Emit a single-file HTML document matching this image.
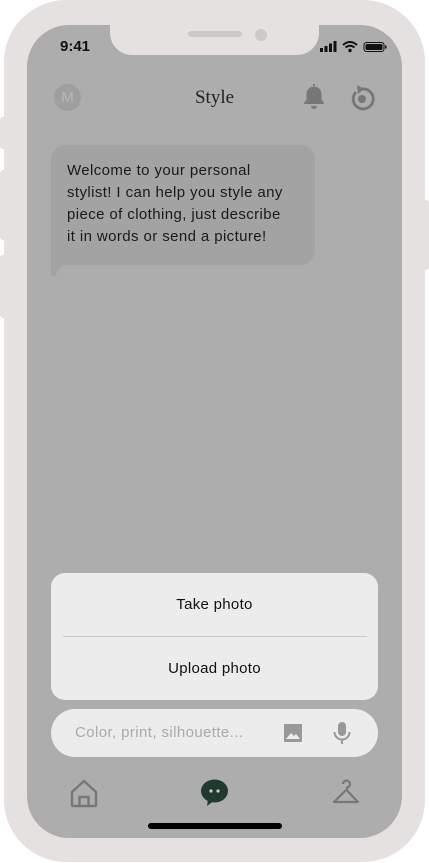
<!DOCTYPE html>
<html><head><style>
*{margin:0;padding:0;box-sizing:border-box}
body{width:429px;height:863px;background:#fff;position:relative;overflow:hidden;font-family:"Liberation Sans",sans-serif}
.phone{position:absolute;left:4px;top:0;width:421px;height:862px;background:#e4e1e0;border-radius:62px}
.btn{position:absolute;background:#e4e1e0;border-radius:3px}
.screen{position:absolute;left:27px;top:25px;width:375px;height:813px;background:#adadad;border-radius:42px;overflow:hidden}
.notch{position:absolute;left:110px;top:0;width:209px;height:55px;background:#e4e1e0;border-radius:0 0 22px 22px}
.abs{position:absolute}
</style></head><body>
<div class="btn" style="left:0;top:117px;width:8px;height:32px"></div>
<div class="btn" style="left:0;top:170px;width:8px;height:70px"></div>
<div class="btn" style="left:0;top:255px;width:8px;height:63px"></div>
<div class="btn" style="left:421px;top:200px;width:8px;height:70px"></div>
<div class="phone"></div>
<div class="screen"></div>
<div class="notch"></div>
<div class="abs" style="left:188px;top:31px;width:54px;height:6px;border-radius:3px;background:#ccc9c8"></div>
<div class="abs" style="left:255px;top:29px;width:12px;height:12px;border-radius:50%;background:#ccc9c8"></div>
<div class="abs" style="left:60px;top:38px;font-size:15px;font-weight:bold;color:#111">9:41</div>
<svg class="abs" style="left:320px;top:41px" width="68" height="12">
<rect x="0" y="7" width="3" height="4" fill="#111"/><rect x="4.5" y="5" width="3" height="6" fill="#111"/><rect x="9" y="2.5" width="3" height="8.5" fill="#111"/><rect x="13.5" y="0" width="3" height="11" fill="#111"/>
<path d="M23 4 Q30 -2 37 4" stroke="#111" stroke-width="2" fill="none"/><path d="M25.5 6.5 Q30 3 34.5 6.5" stroke="#111" stroke-width="2" fill="none"/><circle cx="30" cy="9.5" r="1.7" fill="#111"/>
<rect x="44" y="1.5" width="20" height="9" rx="2.5" fill="none" stroke="#111" stroke-width="1"/><rect x="45.5" y="3" width="17" height="6" rx="1.5" fill="#111"/><rect x="65" y="4.5" width="1.5" height="3" fill="#111"/>
</svg>
<div class="abs" style="left:54px;top:84px;width:27px;height:27px;border-radius:50%;background:#9f9f9f;color:#b8b8b8;font-size:15px;text-align:center;line-height:27px">M</div>
<div class="abs" style="left:0;width:429px;top:87px;text-align:center;font-family:'Liberation Serif',serif;font-size:19px;color:#222">Style</div>
<svg class="abs" style="left:300px;top:82px" width="28" height="30"><path d="M14 2 v2 M5 21 h18 l-2.5-3 v-6 a6.5 6.5 0 0 0 -13 0 v6 z" fill="#777" stroke="#777" stroke-width="2" stroke-linejoin="round"/><path d="M11 24 a3 3 0 0 0 6 0z" fill="#777"/></svg>
<svg class="abs" style="left:347px;top:84px" width="30" height="30"><path d="M9 8 A10 10 0 1 0 15 5" fill="none" stroke="#777" stroke-width="2.8"/><path d="M10 1 L17 5 L11 10 z" fill="#777"/><circle cx="15" cy="15" r="4" fill="#777"/></svg>
<div class="abs" style="left:51px;top:145px;width:264px;height:120px;background:#a3a3a3;border-radius:14px 14px 14px 0"></div>
<div class="abs" style="left:51px;top:258px;width:14px;height:18px;background:#a3a3a3"></div>
<div class="abs" style="left:56px;top:265px;width:30px;height:14px;background:#adadad;border-radius:12px 0 0 0"></div>
<div class="abs" style="left:67px;top:160px;white-space:nowrap;font-size:15px;letter-spacing:0.4px;line-height:22px;color:#1a1a1a">Welcome to your personal<br>stylist! I can help you style any<br>piece of clothing, just describe<br>it in words or send a picture!</div>
<div class="abs" style="left:51px;top:573px;width:327px;height:127px;background:#ececec;border-radius:14px"></div>
<div class="abs" style="left:63px;top:636px;width:304px;height:1px;background:#c8c8c8"></div>
<div class="abs" style="left:51px;top:596px;width:327px;text-align:center;font-size:15px;letter-spacing:0.3px;color:#111">Take photo</div>
<div class="abs" style="left:51px;top:660px;width:327px;text-align:center;font-size:15px;letter-spacing:0.3px;color:#111">Upload photo</div>
<div class="abs" style="left:51px;top:709px;width:327px;height:48px;background:#ececec;border-radius:24px"></div>
<div class="abs" style="left:75px;top:724px;font-size:15px;letter-spacing:0.4px;color:#aaa">Color, print, silhouette...</div>
<svg class="abs" style="left:283px;top:723px" width="20" height="20"><rect x="1" y="1" width="18" height="18" fill="#999"/><path d="M3 16 L8 10 L11 13 L13 11 L17 16 z" fill="#eee"/></svg>
<svg class="abs" style="left:332px;top:721px" width="20" height="24"><rect x="6" y="1" width="8" height="14" rx="4" fill="#999"/><path d="M2.5 11 a7.5 7.5 0 0 0 15 0" fill="none" stroke="#999" stroke-width="2"/><rect x="9" y="18" width="2" height="5" fill="#999"/></svg>
<svg class="abs" style="left:70px;top:779px" width="28" height="29"><path d="M2 13 L14 2 L26 13 V26 a1 1 0 0 1 -1 1 H3 a1 1 0 0 1 -1 -1 z" fill="none" stroke="#777" stroke-width="2.4" stroke-linejoin="round"/><path d="M9.5 27 V18 h9 v9" fill="none" stroke="#777" stroke-width="2.4"/></svg>
<svg class="abs" style="left:200px;top:778px" width="30" height="30"><ellipse cx="14.5" cy="13" rx="13.5" ry="11.5" fill="#1f3a2f"/><path d="M8 21 L7 28 L15 22 z" fill="#1f3a2f"/><circle cx="11" cy="13" r="1.6" fill="#ccc"/><circle cx="18" cy="13" r="1.6" fill="#ccc"/></svg>
<svg class="abs" style="left:331px;top:778px" width="30" height="28"><path d="M12 6 a3.5 3.5 0 1 1 4 3.5 v3 L27 24 H3 L15 12" fill="none" stroke="#777" stroke-width="2.2" stroke-linejoin="round"/></svg>
<div class="abs" style="left:148px;top:823px;width:134px;height:6px;border-radius:3px;background:#000"></div>
</body></html>
